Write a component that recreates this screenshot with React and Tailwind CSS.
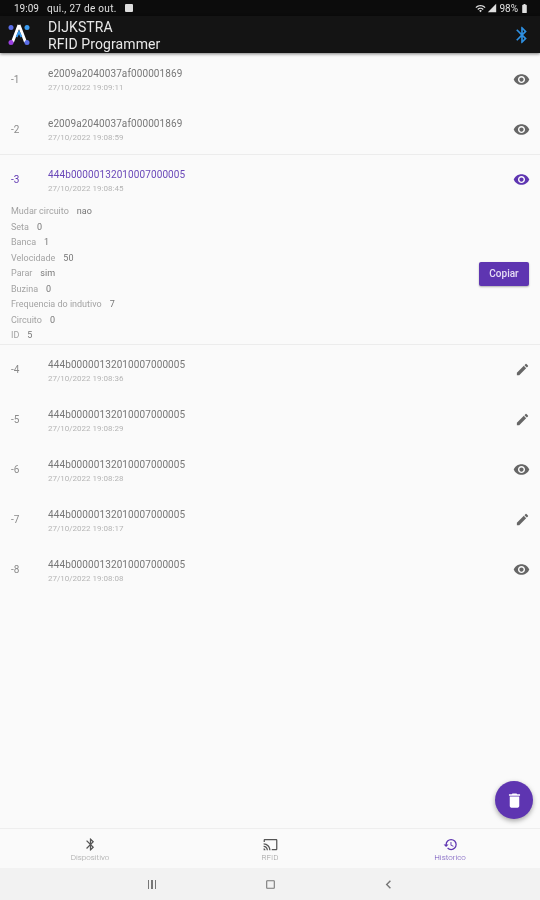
import { MdVisibility, MdEdit, MdDelete, MdRestore, MdBluetooth, MdCast, MdWifi, MdSignalCellular4Bar, MdBatteryFull, MdChevronLeft, MdCropSquare } from "react-icons/md";

const rows = [
  { n: "-1", tag: "e2009a2040037af000001869", date: "27/10/2022 19:09:11", icon: "eye" },
  { n: "-2", tag: "e2009a2040037af000001869", date: "27/10/2022 19:08:59", icon: "eye" },
  { n: "-3", tag: "444b00000132010007000005", date: "27/10/2022 19:08:45", icon: "eye", open: true },
  { n: "-4", tag: "444b00000132010007000005", date: "27/10/2022 19:08:36", icon: "edit" },
  { n: "-5", tag: "444b00000132010007000005", date: "27/10/2022 19:08:29", icon: "edit" },
  { n: "-6", tag: "444b00000132010007000005", date: "27/10/2022 19:08:28", icon: "eye" },
  { n: "-7", tag: "444b00000132010007000005", date: "27/10/2022 19:08:17", icon: "edit" },
  { n: "-8", tag: "444b00000132010007000005", date: "27/10/2022 19:08:08", icon: "eye" },
];

const details = [
  ["Mudar circuito", "nao"],
  ["Seta", "0"],
  ["Banca", "1"],
  ["Velocidade", "50"],
  ["Parar", "sim"],
  ["Buzina", "0"],
  ["Frequencia do indutivo", "7"],
  ["Circuito", "0"],
  ["ID", "5"],
];

// white "A" with the four coloured corner dots
const Logo = () => (
  <svg width="22" height="26" viewBox="0 0 22 26">
    <path d="M11 3 L17.5 20 M11 3 L4.5 20" stroke="#ffffff" strokeWidth="3" fill="none" />
    <path d="M8.5 15 L11 10 L13.5 15" stroke="#3b9cf0" strokeWidth="1.8" fill="none" />
    <circle cx="3" cy="5.5" r="2.5" fill="#5b6ee8" />
    <circle cx="19" cy="5.5" r="2.5" fill="#3b9cf0" />
    <circle cx="3" cy="20.5" r="2.5" fill="#9a3fe0" />
    <circle cx="19" cy="20.5" r="2.5" fill="#5b6ee8" />
  </svg>
);

const Row = ({ row }) => {
  const Icon = row.icon === "eye" ? MdVisibility : MdEdit;
  return (
    <div className={`flex items-center pl-[11px] pr-[10px] ${row.open ? "h-[49px]" : "h-[50px]"}`}>
      <div className={`w-[37px] text-[10px] ${row.open ? "text-[#5e35b1]" : "text-[#8a8a8a]"}`}>{row.n}</div>
      <div className="flex flex-1 flex-col pt-[4px]">
        <div className={`text-[10px] leading-[14px] tracking-[0.1px] ${row.open ? "text-[#6a48b8]" : "text-[#777777]"}`}>{row.tag}</div>
        <div className="text-[8px] leading-[14px] text-[#b5b5b5]">{row.date}</div>
      </div>
      <Icon size={row.icon === "eye" ? 17 : 15} className={row.open ? "text-[#5e35b1]" : "text-[#666666]"} />
    </div>
  );
};

export default function App() {
  return (
    <div className="relative flex h-[900px] w-[540px] flex-col overflow-hidden bg-[#fafafa] font-['Roboto',sans-serif] blur-[0.4px]">
      <div className="flex h-[16px] items-center justify-between bg-[#0c0c0c] pl-[14px] pr-[10px] text-[10px] text-[#e0e0e0]">
        <div className="flex items-center gap-[8px]">
          <span>19:09</span>
          <span className="tracking-[0.3px]">qui., 27 de out.</span>
          <span className="h-[8px] w-[8px] rounded-[1px] bg-[#dddddd]" />
        </div>
        <div className="flex items-center gap-[1px]">
          <MdWifi size={11} />
          <MdSignalCellular4Bar size={10} />
          <span className="ml-[1px]">98%</span>
          <MdBatteryFull size={11} />
        </div>
      </div>

      <div className="flex h-[37px] items-center justify-between bg-[#141414] pl-[8px] pr-[8px] shadow-[0_1px_3px_rgba(0,0,0,0.5)]">
        <div className="flex items-center gap-[18px]">
          <Logo />
          <div className="flex flex-col pt-[2px] text-[14px] leading-[17px] tracking-[0.1px] text-[#e8e8e8]">
            <span>DIJKSTRA</span>
            <span>RFID Programmer</span>
          </div>
        </div>
        <MdBluetooth size={20} className="text-[#2e8fe0]" />
      </div>

      <div className="flex flex-1 flex-col pt-[1px]">
        {rows.map((row) =>
          row.open ? (
            <div key={row.n} className="border-y border-[#ececec]">
              <Row row={row} />
              <div className="flex items-center justify-between pl-[11px] pr-[11px]">
                <div className="flex flex-col">
                  {details.map(([label, value]) => (
                    <div key={label} className="flex h-[15.5px] items-center gap-[8px] text-[9px] text-[#a3a3a3]">
                      <span>{label}</span>
                      <span className="text-[#777777]">{value}</span>
                    </div>
                  ))}
                </div>
                <button className="flex h-[24px] w-[50px] items-center justify-center rounded-[2px] bg-[#5e35b1] text-[10px] font-medium text-[#e6def5] shadow-[0_1px_2px_rgba(0,0,0,0.3)]">
                  Copiar
                </button>
              </div>
            </div>
          ) : (
            <Row key={row.n} row={row} />
          )
        )}
      </div>

      <button className="absolute left-[495px] top-[781px] flex h-[38px] w-[38px] items-center justify-center rounded-full bg-[#5e35b1] text-white shadow-[0_2px_5px_rgba(0,0,0,0.35)]">
        <MdDelete size={19} />
      </button>

      <div className="grid h-[40px] grid-cols-3 border-t border-[#eeeeee] bg-[#fafafa]">
        <div className="flex flex-col items-center justify-center gap-[1px] pt-[2px] text-[#a0a0a0]">
          <MdBluetooth size={15} className="text-[#555555]" />
          <span className="text-[8px] font-light leading-[10px]">Dispositivo</span>
        </div>
        <div className="flex flex-col items-center justify-center gap-[1px] pt-[2px] text-[#a0a0a0]">
          <MdCast size={15} className="text-[#555555]" />
          <span className="text-[8px] font-light leading-[10px]">RFID</span>
        </div>
        <div className="flex flex-col items-center justify-center gap-[1px] pt-[2px] text-[#6a48b8]">
          <MdRestore size={15} className="text-[#5e35b1]" />
          <span className="text-[8px] font-light leading-[10px]">Historico</span>
        </div>
      </div>

      <div className="grid h-[32px] grid-cols-[118px_118px_118px] items-center justify-center justify-items-center bg-[#f2f2f2] text-[#777777]">
        <div className="flex gap-[2px]">
          <span className="h-[9px] w-[1.5px] bg-[#777777]" />
          <span className="h-[9px] w-[1.5px] bg-[#777777]" />
          <span className="h-[9px] w-[1.5px] bg-[#777777]" />
        </div>
        <MdCropSquare size={13} />
        <MdChevronLeft size={17} />
      </div>
    </div>
  );
}
